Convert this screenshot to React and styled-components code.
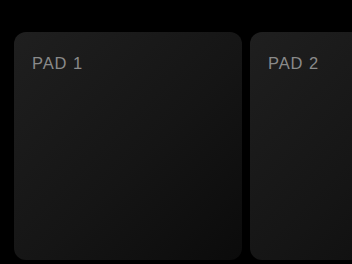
import React from "react";
import styled, { createGlobalStyle } from "styled-components";

const Global = createGlobalStyle`
  html, body { margin: 0; padding: 0; background: #000; overflow: hidden; }
  body { width: 352px; height: 264px; }
`;

const Stage = styled.div`
  display: flex;
  gap: 8px;
  padding: 32px 0 0 14px;
  width: 352px;
  height: 264px;
  box-sizing: border-box;
  overflow: hidden;
  background: #000;
`;

const Pad = styled.div`
  flex: 0 0 228px;
  height: 228px;
  box-sizing: border-box;
  border-radius: 12px;
  background: linear-gradient(135deg, #1f1f1f 0%, #151515 55%, #0b0b0b 100%);
  padding: 21px 18px;
`;

const Label = styled.div`
  font-family: "Liberation Sans", Arial, sans-serif;
  font-size: 16.5px;
  line-height: 20px;
  letter-spacing: 0.9px;
  color: #8a8a8a;
`;

export default function App() {
  return (
    <>
      <Global />
      <Stage>
        {["PAD 1", "PAD 2"].map((l) => (
          <Pad key={l}>
            <Label>{l}</Label>
          </Pad>
        ))}
      </Stage>
    </>
  );
}
